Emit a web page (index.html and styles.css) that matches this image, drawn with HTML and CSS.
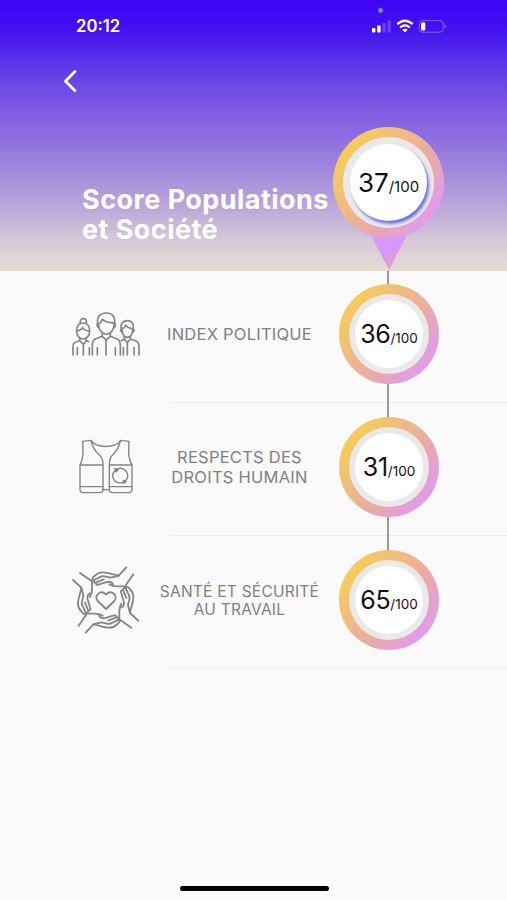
FILE: index.html
```
<!DOCTYPE html>
<html lang="fr">
<head>
<meta charset="utf-8">
<meta name="viewport" content="width=device-width, initial-scale=1">
<title>Score Populations et Société</title>
<link rel="stylesheet" href="styles.css">
</head>
<body>
<main class="screen">
  <header class="hero">
    <div class="status">
      <span class="clock">20:12</span>
      <svg class="indicators" viewBox="0 0 80 30" aria-hidden="true">
        <circle cx="10.5" cy="4.5" r="2.4" fill="#6c9aa6"/>
        <g fill="#fff">
          <rect x="2" y="22" width="3.4" height="4.5" rx="1"/>
          <rect x="7.2" y="19.5" width="3.4" height="7" rx="1"/>
          <rect x="12.4" y="17" width="3.2" height="9.5" rx="1" opacity=".22"/>
          <rect x="17.6" y="14.5" width="3.2" height="12" rx="1" opacity=".22"/>
        </g>
        <g fill="none" stroke="#fff" stroke-width="2.3">
          <path d="M27.3 18.2Q35 11.3 42.7 18.2"/>
          <path d="M30.2 21.5Q35 17.2 39.8 21.5"/>
        </g>
        <path d="M32.4 23.8Q35 21.8 37.6 23.8L35 26.6Z" fill="#fff"/>
        <rect x="49.2" y="14.6" width="24" height="11.6" rx="3.4" fill="none" stroke="#fff" stroke-opacity=".35"/>
        <rect x="51" y="16.3" width="4.3" height="8.2" rx="1.5" fill="#fff"/>
        <path d="M74.6 18.4q1.6.4 1.6 2t-1.6 2z" fill="#fff" opacity=".4"/>
      </svg>
    </div>
    <svg class="back" viewBox="0 0 14 24" aria-label="Retour"><path d="M12 2.5L2.5 12.3L12 21.8"/></svg>
    <div class="summary">
      <h1 class="title">Score Populations<br>et Société</h1>
      <div class="pin">
        <div class="ring ring-large"><div class="rim"><div class="dial"><span class="value">37</span><span class="total">/100</span></div></div></div>
        <svg class="tip" viewBox="0 0 36 36" aria-hidden="true">
          <defs><linearGradient id="tip" x1="0" y1="0" x2="0" y2="1"><stop offset=".4" stop-color="#d897fc"/><stop offset="1" stop-color="#e6a0c8"/></linearGradient></defs>
          <path d="M0 0H36L18 35Z" fill="url(#tip)"/>
        </svg>
      </div>
    </div>
  </header>

  <section class="scores">
    <article class="row">
      <svg class="icon people" viewBox="0 0 270 195" aria-hidden="true">
        <path d="M61 69C59 60 65 56 70 56S82 60 79 69"/>
        <path d="M50 94C49 77 57 69 69 69S90 77 89 94C89 108 79 117 69 117S50 108 50 94ZM51 93C61 92 65 88 68 83C73 91 80 93 89 94"/>
        <path d="M59 114V122L43 128C40 130 39 133 39 140V165M78 114V121L86 125M59 122L70 133L79 123M70 133V165M52 143V165M88 143V165"/>
        <path d="M113 72C110 49 121 39 139 39S166 50 164 72M115 73C117 91 127 103 139 103S161 91 163 73M114 70C109 71 111 82 117 82M163 70C168 71 167 82 161 82M116 72C123 69 125 63 127 58C137 68 149 67 163 69"/>
        <path d="M127 98V109L104 118C97 122 97 128 97 138V165M151 98V109L173 118C180 122 181 128 181 138V165M127 109L138 120L151 109M138 120V165M112 143V165M166 143V165"/>
        <path d="M184 87C180 70 190 62 202 62S223 70 219 88M186 88C187 104 193 112 202 112S217 104 218 89M184 87C180 88 182 97 188 97M219 87C224 88 222 97 217 97M186 86C193 84 196 80 197 76C203 84 210 85 219 87"/>
        <path d="M193 109V117L184 122M211 109V117L230 124C236 127 237 132 237 140V165M193 117L202 128L211 117M202 128V165M190 143V165M222 143V165"/>
      </svg>
      <h2 class="label">INDEX POLITIQUE</h2>
      <div class="score"><div class="ring"><div class="rim"><div class="dial"><span class="value">36</span><span class="total">/100</span></div></div></div></div>
    </article>
    <article class="row">
      <svg class="icon vest" viewBox="0 0 240 225" aria-hidden="true">
        <path d="M53 34L79 31C82 53 94 67 104 76C112 84 114 91 114 104V177Q114 188 104 188H55Q45 188 45 178V105C55 88 55 69 53 34ZM192 34L166 31C163 53 151 67 142 76C134 84 133 91 133 104V177Q133 188 143 188H191Q201 188 201 178V105C190 88 190 69 192 34Z"/>
        <path d="M79 34C98 54 146 55 167 34M45 105H114M133 105H201M45 170H114M133 170H201M114 179H133"/>
        <path d="M152 119C134 137 146 163 173 158M157 117C177 109 194 129 186 146L180 155"/>
        <path d="M150 116L159 119L153 125ZM175 151L183 154L177 160Z" fill="#858585"/>
      </svg>
      <h2 class="label">RESPECTS DES<br>DROITS HUMAIN</h2>
      <div class="score"><div class="ring"><div class="rim"><div class="dial"><span class="value">31</span><span class="total">/100</span></div></div></div></div>
    </article>
    <article class="row">
      <svg class="icon care" viewBox="0 0 240 240" aria-hidden="true">
        <defs>
          <g id="hand">
            <path d="M184 22L161 47C146 46 134 37 114 37C104 37 98 39 92 45L83 53C80 58 84 62 89 59L110 49"/>
            <path d="M87 60C84 66 88 70 94 67L116 58M93 68C92 74 96 76 102 73L119 68C134 62 141 67 144 73"/>
            <path d="M110 49C122 46 128 53 138 53L161 47M133 73C140 77 146 79 156 79H180L205 43"/>
          </g>
        </defs>
        <path d="M123 147L98 123C87 107 106 87 123 103C141 87 160 108 148 123Z"/>
        <use href="#hand"/>
        <use href="#hand" transform="rotate(90 122 120)"/>
        <use href="#hand" transform="rotate(180 123 120)"/>
        <use href="#hand" transform="rotate(270 123 121)"/>
      </svg>
      <h2 class="label label-small">SANTÉ ET SÉCURITÉ<br>AU TRAVAIL</h2>
      <div class="score"><div class="ring"><div class="rim"><div class="dial"><span class="value">65</span><span class="total">/100</span></div></div></div></div>
    </article>
  </section>
  <div class="home-bar"></div>
</main>
</body>
</html>
```
FILE: styles.css
```
* { box-sizing: border-box; }

body {
  margin: 0;
  background: #fafafa;
  font-family: Inter, "Liberation Sans", sans-serif;
}

.screen {
  display: flex;
  flex-direction: column;
  height: 900px;
  overflow: hidden;
}

.hero {
  height: 271px;
  flex: none;
  background: linear-gradient(#3d04f6 0, #4411f1 30px, #5c35e8 62px, #7d57e2 105px, #8f70df 140px, #a58cdc 175px, #bda9d9 210px, #d5c8d5 240px, #e6ddd3 271px);
}

.status {
  display: flex;
  justify-content: space-between;
  height: 40px;
  padding: 6px 57px 0 76px;
}

.clock {
  margin-top: 10px;
  color: #fff;
  font-size: 16.7px;
  font-weight: 600;
  line-height: 21px;
}

.indicators { width: 80px; height: 30px; }

.back {
  display: block;
  width: 14px;
  height: 24px;
  margin: 29px 0 0 63px;
  fill: none;
  stroke: #fff;
  stroke-width: 2.8;
  stroke-linecap: round;
  stroke-linejoin: round;
}

.summary {
  display: flex;
  justify-content: space-between;
  padding: 34px 63px 0 82px;
}

.title {
  margin: 58px 0 0;
  color: #fff;
  font-size: 27px;
  font-weight: 700;
  line-height: 30px;
  letter-spacing: .45px;
  white-space: nowrap;
}

.pin {
  display: flex;
  flex: none;
  flex-direction: column;
  align-items: center;
}

.tip { width: 36px; height: 36px; margin-top: -3px; }

.ring {
  display: flex;
  width: 100px;
  height: 100px;
  padding: 10px;
  border-radius: 50%;
  background: linear-gradient(130deg, #f5cb5e 18%, #e9a8ab 62%, #e19ee4 82%);
}

.rim {
  display: flex;
  flex: 1;
  padding: 6px;
  border-radius: 50%;
  background: #e9e9e9;
}

.dial {
  display: flex;
  flex: 1;
  align-items: baseline;
  justify-content: center;
  border-radius: 50%;
  background: #fff;
  color: #111;
  line-height: 68px;
}

.ring-large {
  position: relative;
  width: 111px;
  height: 111px;
}

.ring-large .rim { padding: 7px; }

.ring-large .dial {
  line-height: 77px;
  box-shadow: 2px 3px 3px #6b70e6;
}

.value { font-size: 25px; letter-spacing: -.3px; }
.total { font-size: 13.5px; }
.ring-large .value { font-size: 26px; letter-spacing: 0; }
.ring-large .total { font-size: 15px; }

.row {
  display: grid;
  grid-template-columns: 90px 179px 1fr;
  height: 133px;
  padding-left: 60px;
  background: linear-gradient(#efefef, #efefef) 170px 100% / 100% 1px no-repeat;
}

.row:first-child { height: 132px; }

.icon {
  fill: none;
  stroke: #858585;
  stroke-width: 5;
  stroke-linecap: round;
  stroke-linejoin: round;
}

.people { width: 90px; height: 65px; margin-top: 29px; }
.vest { width: 80px; height: 75px; margin: 27px 0 0 5px; stroke-width: 4.2; }
.care { width: 80px; height: 80px; margin: 24px 0 0 5px; stroke-width: 5.5; }

.label {
  align-self: center;
  margin: 0;
  color: #808080;
  font-size: 16.5px;
  font-weight: 400;
  line-height: 20px;
  letter-spacing: .24px;
  text-align: center;
  white-space: nowrap;
  padding-bottom: 5px;
}

.row:first-child .label { padding-bottom: 6px; }

.label-small {
  padding-bottom: 4px;
  font-size: 15.5px;
  line-height: 18px;
}

.score {
  width: 100px;
  margin-left: 10px;
  padding-top: 14px;
  background: linear-gradient(#999, #999) 48px 0 / 2px 100% no-repeat;
}

.row:first-child .score { padding-top: 13px; }
.row:last-child .score { background-size: 2px 20px; }

.home-bar {
  width: 149px;
  height: 5px;
  margin: auto 0 9px 180px;
  border-radius: 3px;
  background: #000;
}
```
